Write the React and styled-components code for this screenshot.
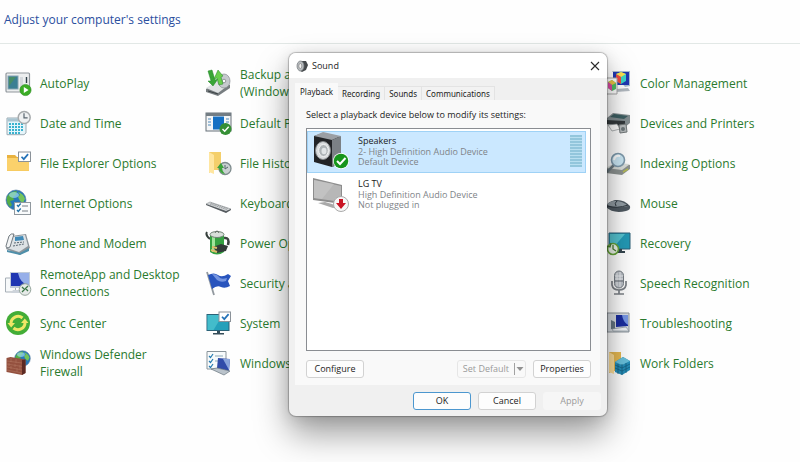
import React, { useState } from "react";
import styled, { createGlobalStyle } from "styled-components";

const GlobalStyle = createGlobalStyle`
  * { box-sizing: border-box; }
  body {
    margin: 0;
    background: #fefefe;
    font-family: "Open Sans", "Noto Sans", sans-serif;
    overflow: hidden;
  }
  button { font: inherit; }
`;

const Page = styled.main`
  position: relative;
  min-height: 100vh;
`;

const Header = styled.header`
  height: 44px;
  padding: 0 4px 4px;
  display: flex;
  align-items: center;
  border-bottom: 1px solid #e2e8e6;
`;

const Heading = styled.h1`
  margin: 0;
  font-size: 12px;
  line-height: 16px;
  font-weight: 400;
  color: #2b4f9e;
`;

const Catalogue = styled.nav`
  display: grid;
  grid-template-columns: repeat(4, 200px);
  padding-top: 19px;
`;

const Column = styled.ul`
  list-style: none;
  margin: 0;
  padding: 0;
  grid-column: ${(p) => p.$at};
`;

const Entry = styled.li`
  height: 40px;
`;

const EntryLink = styled.a`
  height: 100%;
  padding: 0 4px;
  display: flex;
  align-items: center;
  gap: 8px;
  font-size: 12px;
  line-height: 17px;
  color: #2a7a2e;
  text-decoration: none;
  white-space: pre-line;
`;

const Icon = styled.svg`
  width: ${(p) => p.$size || 28}px;
  height: ${(p) => p.$size || 28}px;
  flex: none;
  display: block;
`;

const Dialog = styled.section`
  position: absolute;
  left: 289px;
  top: 53px;
  width: 318px;
  display: flex;
  flex-direction: column;
  background: #f0f0f0;
  border-radius: 7px;
  overflow: hidden;
  box-shadow: 0 0 1px 1px rgba(0, 0, 0, 0.24), 0 18px 34px rgba(0, 0, 0, 0.38), 0 2px 16px rgba(0, 0, 0, 0.12);
  font-size: 9px;
  line-height: 10px;
  color: #1c1c1c;
`;

const TitleBar = styled.header`
  height: 25px;
  padding: 0 7px;
  display: flex;
  align-items: center;
  gap: 4px;
  background: #fff;
`;

const Title = styled.h2`
  flex: 1;
  margin: 0;
  font-size: 9px;
  font-weight: 400;
`;

const CloseButton = styled.button`
  display: flex;
  padding: 0;
  border: 0;
  background: none;
`;

const TabStrip = styled.div`
  display: flex;
  align-items: flex-end;
  height: 22px;
  padding: 0 6px;
`;

const Tab = styled.button`
  height: ${(p) => (p.$active ? 17 : 14)}px;
  padding: 0 4px;
  border: 1px solid ${(p) => (p.$active ? "#f9f9f9" : "#e3e3e3")};
  border-bottom: 0;
  border-left-width: ${(p) => (p.$active ? 1 : 0)}px;
  background: ${(p) => (p.$active ? "#f9f9f9" : "#f2f2f2")};
  color: #1c1c1c;
  font-family: "Noto Sans", sans-serif;
  font-size: 8px;
  white-space: nowrap;
`;

const Panel = styled.div`
  margin: 0 7px 0 6px;
  padding: 10px 9px 7px 11px;
  display: flex;
  flex-direction: column;
  background: #f9f9f9;
`;

const Prompt = styled.p`
  margin: 0 0 8px;
`;

const DeviceList = styled.ul`
  list-style: none;
  margin: 0;
  padding: 2px 4px 2px 0;
  min-height: 223px;
  display: flex;
  flex-direction: column;
  gap: 1px;
  background: #fff;
  border: 1px solid #8a8d92;
`;

const Device = styled.li`
  height: 42px;
  padding: 1px 3px 3px 4px;
  display: flex;
  align-items: center;
  background: ${(p) => (p.$selected ? "#cbe8ff" : "#fff")};
  border: 1px solid ${(p) => (p.$selected ? "#9fd2f6" : "#fff")};
`;

const DeviceText = styled.div`
  flex: 1;
  margin-left: 8px;
  color: #808488;
`;

const DeviceName = styled.div`
  margin-bottom: 1px;
  color: #1c1c1c;
`;

const Meter = styled.div`
  width: 12px;
  height: 32px;
  background: repeating-linear-gradient(#93c6dc 0 2px, #b9dff0 2px 3px);
`;

const Actions = styled.div`
  display: flex;
  align-items: center;
  gap: 7px;
  margin-top: ${(p) => (p.$footer ? 0 : 9)}px;
  padding: ${(p) => (p.$footer ? "7px 6px 6px" : "0")};
`;

const Spacer = styled.span`
  flex: 1;
`;

const Button = styled.button`
  min-width: 58px;
  height: 18px;
  padding: 0 4px;
  border: 1px solid ${(p) => (p.$primary ? "#4c97cf" : "#d2d2d2")};
  border-radius: 3px;
  background: #fdfdfd;
  color: #1c1c1c;
  &:disabled {
    border-color: #f6f6f6;
    background: #f6f6f6;
    color: #9a9a9a;
  }
`;

const Split = styled.div`
  display: flex;
  align-items: center;
  height: 18px;
  border: 1px solid #e6e6e6;
  border-radius: 3px;
`;

const SplitButton = styled.button`
  display: flex;
  align-items: center;
  height: 12px;
  padding: 0 ${(p) => (p.$arrow ? 1 : 5)}px;
  border: 0;
  border-left: ${(p) => (p.$arrow ? "1px solid #a2a2a2" : "0")};
  background: none;
  color: #9a9a9a;
`;

const Globe = ({ x, y, r }) => (
  <g>
    <circle cx={x} cy={y} r={r} fill="#2878b8" stroke="#53799a" strokeWidth=".6" />
    <g transform={`translate(${x} ${y}) scale(${r / 10})`}>
      <path d="M-9-3Q-6-9 1-9L0-5-3-3-2 0-6 1-4 5-6 7Q-10 3-9-3Z" fill="#55ad46" />
      <path d="M2-8Q8-6 9-1L7 3 4 1 2-3 4-5ZM-1 2 4 3 3 7 0 9-2 6Z" fill="#75c45a" />
      <ellipse cx="-2" cy="-5" rx="5" ry="3" fill="#a4e0f5" opacity=".65" />
    </g>
  </g>
);

const CheckCard = ({ x, y, w = 12, h = 9.5 }) => (
  <g>
    <rect x={x} y={y} width={w} height={h} fill="#fff" stroke="#8b9299" />
    <path d={`M${x + 3} ${y + h / 2}l2.3 2.4 4.3-5`} fill="none" stroke="#2472b8" strokeWidth="1.7" />
  </g>
);

const art = {
  autoplay: (
    <>
      <rect x="2" y="4" width="23.5" height="19" rx="1" fill="#eceeef" stroke="#8f969c" strokeWidth="1.2" />
      <rect x="4" y="7" width="10" height="13" fill="#3b7f93" stroke="#85a3b0" />
      <path d="M5 8h7l-7 9Z" fill="#478c67" />
      <path d="M16 8h3v11h-3z" fill="#d5d9dd" />
      <path d="M22.5 8v6" stroke="#2d3f48" strokeWidth="1.4" />
      <circle cx="21.5" cy="21" r="5.6" fill="#3bad25" stroke="#2a8c20" strokeWidth=".6" />
      <path d="M19.8 18v6l4.8-3Z" fill="#fff" />
    </>
  ),
  date: (
    <>
      <path d="M3 9h19v15l-2 1.7H3Z" fill="#e5f5fa" stroke="#9cabb3" />
      <path d="M3.5 9.5h18v3h-18z" fill="#a9c4d0" />
      <path d="M5 15h15M5 18h15M5 21h15M5 24h12" stroke="#39b2cf" strokeWidth="1.8" strokeDasharray="2 1" />
      <circle cx="20.2" cy="8.5" r="6" fill="#eff1f2" stroke="#a7abad" strokeWidth="1.5" />
      <path d="M20 4.3v4.5h3.6" fill="none" stroke="#59666f" strokeWidth="1.2" />
    </>
  ),
  explorer: (
    <>
      <path d="M3 6h8l2 2h12v14H3Z" fill="#e9b23f" />
      <path d="M3 9h22v12.8H3Z" fill="#fbd16b" />
      <CheckCard x={14.5} y={3} />
    </>
  ),
  internet: (
    <>
      <Globe x={12} y={11} r={10} />
      <rect x="10.5" y="13.5" width="16" height="12" fill="#f9fbfc" stroke="#90989e" />
      <path d="m13 16 1.3 1.5 2.4-3M13 21l1.3 1.5 2.4-3" fill="none" stroke="#2372a8" strokeWidth="1.3" />
      <path d="M18 17h6M18 22h6" stroke="#777f85" />
    </>
  ),
  phone: (
    <>
      <path d="M2 20 7 7 22 5l4 14-10 7Z" fill="#8d959b" />
      <path d="M3 19 8 8 21 6l3 11-9 6Z" fill="#dde2e5" />
      <path d="m11 8 8-1 1 4-9 1Z" fill="#3f8ab8" />
      <path d="M5 7q2-3 5-2L6 18q-4 2-4-1Z" fill="#f2f4f5" stroke="#636c73" strokeWidth=".9" />
      <path d="m10 14 10-1M9 17l11-2" stroke="#5c6973" strokeDasharray="2 1" />
      <path d="m3 21 13 3 9-5v3l-9 4-13-3Z" fill="#4e8faa" />
    </>
  ),
  remote: (
    <>
      <path d="M1.5 9h10v14h-10z" fill="#f7f9fa" stroke="#a7afb7" />
      <path d="M6 3h20v16H6z" fill="#bfcad8" />
      <path d="M7 4h18v13H7z" fill="#1e36b2" />
      <path d="M14 4h11v13Q16 14 14 4Z" fill="#96afe9" />
      <path d="M9 21h12l3 3H7Z" fill="#cdd3da" />
      <circle cx="21" cy="20.5" r="5.8" fill="#e6eae8" stroke="#94a49b" />
      <path d="m18 18 2.5 2.5L18 23m6-6-2.5 2.5L24 22" fill="none" stroke="#3b7647" strokeWidth="1.3" />
    </>
  ),
  sync: (
    <>
      <circle cx="14" cy="14" r="12" fill="#43ad37" />
      <path d="M7 14.5A7 7 0 0 1 18.5 9" fill="none" stroke="#f0e666" strokeWidth="3" />
      <path d="M3.5 14h7.5l-3.8 4.5Z" fill="#f0e666" />
      <path d="M21 13.5A7 7 0 0 1 9.5 19" fill="none" stroke="#f0e666" strokeWidth="3" />
      <path d="M24.5 14H17l3.8-4.5Z" fill="#f0e666" />
    </>
  ),
  firewall: (
    <>
      <Globe x={18.5} y={9.5} r={7.8} />
      <path d="m2.5 9 4-1 15 2.500V24L18 26 2.500 23Z" fill="#94513f" />
      <path d="m18 11 3.500-.5V24L18 26Z" fill="#5d2a23" />
      <path d="m3 12 15 2M3 15l15 2.500M3 18l15 3M3 21l15 3M7 9v4m5-3v4m-7 0v3m6-2v3m5-2v4M7 17v3m6-1v4" stroke="#b57b64" strokeWidth=".5" />
    </>
  ),
  backup: (
    <>
      <path d="m2 20 11-7 13 3v3L14 27 2 23Z" fill="#777d80" />
      <path d="m2 19 11-7 13 3-12 9Z" fill="#dfe2e3" />
      <ellipse cx="20" cy="12" rx="6" ry="7" fill="#c6cace" stroke="#888e92" strokeWidth=".7" />
      <circle cx="20" cy="12" r="1.800" fill="#fff" stroke="#929699" />
      <path d="m4 22 10 3" stroke="#3b4245" />
      <path d="M9 17 4 12h3L4 2l4-1 3 10 3-1Z" fill="#38a536" stroke="#238426" strokeWidth=".5" />
      <path d="m14 1 5 6-2 1 2 7-4 1-2-7-3 1Z" fill="#68cf4d" stroke="#238426" strokeWidth=".5" />
    </>
  ),
  defaults: (
    <>
      <rect x="2" y="4" width="25" height="18" fill="#f5f6f7" stroke="#667078" />
      <path d="M2 4h25v3H2z" fill="#737d84" />
      <path d="M9 7.500h11v13H9z" fill="#1670c3" />
      <path d="M4 10h3m-3 3h3m-3 3h3m15-6h3m-3 3h3" stroke="#4f89b9" />
      <circle cx="21.500" cy="20" r="6" fill="#358f35" />
      <path d="m18.500 20 2.200 2.300 4-4.500" fill="none" stroke="#fff" strokeWidth="1.400" />
    </>
  ),
  history: (
    <>
      <path d="M5 3h12v18H9l-4 3Z" fill="#f4cf6b" />
      <path d="m5 3 5 3v19l-5-2Z" fill="#ffe6a0" />
      <circle cx="21" cy="19.500" r="6" fill="#c9d0d1" stroke="#7e8b8d" strokeWidth="1.300" />
      <path d="M21 16v4l3-2" fill="none" stroke="#536268" />
      <path d="M21 25a6 6 0 0 1-6-6h-2l4-5 3 5h-2q0 3 3 6Z" fill="#3ca43b" />
    </>
  ),
  keyboard: (
    <>
      <path d="m2 15 4-2 21 7-5 3Z" fill="#d2d5d7" stroke="#8f9497" strokeWidth=".6" />
      <path d="m6 15 17 5.500M7 14l17 5.500" stroke="#85898c" strokeWidth=".8" strokeDasharray="1.500 .8" />
      <path d="m2 15 20 7 5-2v1l-5 3-20-8Z" fill="#555b5f" />
    </>
  ),
  power: (
    <>
      <path d="M20 9q6-1 4 7" fill="none" stroke="#3b4341" strokeWidth="2.500" />
      <path d="M6 10Q1 6 3 3" fill="none" stroke="#36403c" strokeWidth="2" />
      <path d="M6 6q7-3 14 0v17q-7 5-14 0Z" fill="#35a142" />
      <path d="M8 7h3v16H8z" fill="#a1e49c" />
      <ellipse cx="13" cy="5.500" rx="7" ry="3" fill="#d8dfda" stroke="#6f8175" />
      <path d="M11 4q2-4 4 0" fill="none" stroke="#667068" />
      <path d="m9 18 8-3 7 2-2 5-9 2Z" fill="#333b39" />
      <path d="m7 21 6 2m-5-5 5 1" stroke="#dbbd68" strokeWidth="2" />
    </>
  ),
  flag: (
    <>
      <path d="m3 3 7 23" stroke="#92999f" strokeWidth="1.800" />
      <path d="M4 6q6-3 10 0t10-1l3 2-3 5 2 5q-5 3-9 1t-9 2Z" fill="#2854bd" />
      <path d="M8 5q5 0 7 3t8 1l-1 3q-5 2-9-1Z" fill="#7595e0" />
    </>
  ),
  system: (
    <>
      <rect x="3" y="5.500" width="22" height="16" fill="#25a0ba" stroke="#2b6278" />
      <path d="M3.500 6h15l-9 15h-6z" fill="#43bccb" />
      <path d="M13 22h3v2h4v1.500H9V24h4z" fill="#344c59" />
      <CheckCard x={15} y={3} w={11.5} />
    </>
  ),
  tools: (
    <>
      <path d="M3 2.500h19V20H3z" fill="#f7fafb" stroke="#89949b" />
      <path d="m5 7 1.500 1.500L9 5m-4 7 1.500 1.500L9 10m-4 7 1.500 1.500L9 15" fill="none" stroke="#247ab0" strokeWidth="1.200" />
      <path d="M11 7h8M11 12h5" stroke="#8aa8b7" />
      <path d="m14 9 12 1-1 12-12-3Z" fill="#314ca9" />
      <path d="m19 10 7 0-1 11Z" fill="#8aa5db" />
      <path d="m7 20 6-1 13 3-6 4Z" fill="#bac3cb" stroke="#69757e" strokeWidth=".7" />
    </>
  ),
  color: (
    <>
      <path d="M8 2h18v15l-5 1Z" fill="#aabed1" />
      <path d="M9 3h16v13H9z" fill="#2038b2" />
      <path d="m12 5 5-2 5 2v7l-5 3-5-3Z" fill="#3bd5c7" />
      <path d="m12 5 5-2 5 2-5 3Z" fill="#ffe04e" />
      <path d="m12 5 5 3v7l-5-3Z" fill="#f04a42" />
      <path d="m12 20 12-1 2 3-14 1Z" fill="#b2b9c0" />
      <path d="M2 9h11v16H2z" fill="#fff" stroke="#a8a8a8" />
      <path d="m4 13 4-2 4 3v6l-4 2-4-3Z" fill="#50bf68" />
      <path d="m4 13 4-2 4 3-4 2Z" fill="#edc445" />
      <path d="m4 13 4 3v6l-4-3Z" fill="#dc49a5" />
    </>
  ),
  printer: (
    <>
      <path d="m3 9 6-5 17 2v8l-5 4L2 15Z" fill="#858f92" />
      <path d="m6 8 4-3 14 2-4 3Z" fill="#3d5f62" />
      <path d="m2 11 19 1v5L2 15Z" fill="#343a3d" />
      <path d="m4 16 9-1 3 5-8 2Z" fill="#fff" stroke="#7d8587" strokeWidth=".6" />
      <path d="m15 16 7-1 1 8-7 1Z" fill="#b7bcbd" stroke="#727879" />
      <circle cx="19" cy="20" r="2" fill="#6d777a" />
    </>
  ),
  indexing: (
    <>
      <path d="m2 20 8-5 16 1v4l-8 6-16-2Z" fill="#8e9492" />
      <path d="m2 19 8-5 16 1-8 6Z" fill="#dadeda" />
      <path d="m19 23 5-3" stroke="#b6bd54" strokeWidth="1.500" />
      <path d="m10 16-7 7" stroke="#6d7b82" strokeWidth="2.500" />
      <circle cx="14" cy="11" r="6.500" fill="#cbe8f5" stroke="#7f9bad" strokeWidth="1.600" />
      <path d="M10 11q1-5 6-4" fill="none" stroke="#fff" strokeWidth="2" />
    </>
  ),
  mouse: (
    <>
      <path d="M2 18q1-5 9-7 9-1 15 6 1 4-4 5-13 3-20-4Z" fill="#4f5961" />
      <path d="M3 16q2-4 8-4 8 0 13 5-10 3-21-1Z" fill="#929da4" />
      <path d="M13 12q-3 2-1 5m-9 0q10 3 21-1" fill="none" stroke="#303940" />
    </>
  ),
  recovery: (
    <>
      <path d="M5 4h21v16H5z" fill="#239ab6" stroke="#2f6178" />
      <path d="M6 5h15L9 19H6z" fill="#55c3d0" />
      <path d="M14 20h4v2h3v2H11v-2h3z" fill="#34454d" />
      <circle cx="9" cy="20" r="5.500" fill="#edf4e9" stroke="#67a63a" strokeWidth="1.600" />
      <path d="M9 16v4l3 2M3 17l3 1 1-4" fill="none" stroke="#4b7d32" strokeWidth="1.300" />
    </>
  ),
  speech: (
    <>
      <path d="M8 12v4q1 5 7 5t7-5v-4M15 21v4m-5 0h10" fill="none" stroke="#7c8187" strokeWidth="1.700" />
      <rect x="10.500" y="2" width="9" height="17" rx="4.500" fill="#babfc6" stroke="#777e85" />
      <path d="M13 4v13m3-14v15M11 7h8m-8 3h8" stroke="#e9ecef" />
      <path d="M11 12h8" stroke="#636970" />
    </>
  ),
  trouble: (
    <>
      <path d="M3 4h22v19H3z" fill="#d8dde2" stroke="#8e969d" />
      <path d="M12 6h12v11l-12 1Z" fill="#1b2e9f" />
      <path d="M18 6h6v10q-5-3-6-10Z" fill="#7797e4" />
      <path d="m7 11 4 2v7H7z" fill="#667784" />
      <path d="m8 20 14-2 3 4H9Z" fill="#eef1f4" stroke="#7b8791" strokeWidth=".6" />
    </>
  ),
  work: (
    <>
      <path d="M5 3h12v19H9l-4 2Z" fill="#e6b952" />
      <path d="m5 3 5 3v19l-5-2Z" fill="#ffe09a" />
      <path d="m11 13 8-5 7 4v9l-8 5-7-3Z" fill="#258db7" />
      <path d="m11 13 8-5 7 4-8 4Z" fill="#68c0db" />
      <path d="m11 16 7 3 8-4m-15 4 7 3 8-4m-12-3v10m8-11v10m-4-9v11" fill="none" stroke="#156181" strokeWidth=".8" />
    </>
  ),
};

const columns = [
  { at: 1, items: [["autoplay", "AutoPlay"], ["date", "Date and Time"], ["explorer", "File Explorer Options"], ["internet", "Internet Options"], ["phone", "Phone and Modem"], ["remote", "RemoteApp and Desktop\nConnections"], ["sync", "Sync Center"], ["firewall", "Windows Defender\nFirewall"]] },
  { at: 2, items: [["backup", "Backup and Restore\n(Windows 7)"], ["defaults", "Default Programs"], ["history", "File History"], ["keyboard", "Keyboard"], ["power", "Power Options"], ["flag", "Security and Maintenance"], ["system", "System"], ["tools", "Windows Tools"]] },
  { at: 4, items: [["color", "Color Management"], ["printer", "Devices and Printers"], ["indexing", "Indexing Options"], ["mouse", "Mouse"], ["recovery", "Recovery"], ["speech", "Speech Recognition"], ["trouble", "Troubleshooting"], ["work", "Work Folders"]] },
];

const SpeakerArt = () => (
  <Icon $size={38} viewBox="0 0 38 38" aria-hidden="true">
    <path d="m2 4 9-3 18 4v26l-9 4-18-5Z" fill="#222427" />
    <path d="m2 4 9-4 18 4-9 4Z" fill="#9b9fa4" />
    <path d="m20 8 9-4v27l-9 4Z" fill="#7b8085" />
    <ellipse cx="11" cy="18.500" rx="7.500" ry="9" fill="#d9dcde" stroke="#838789" />
    <ellipse cx="11.500" cy="18.500" rx="4.800" ry="6" fill="#aeb4b7" stroke="#f3f4f4" />
    <ellipse cx="12" cy="19" rx="2.500" ry="3.200" fill="#e1e5e7" />
    <circle cx="29" cy="29" r="8" fill="#fff" />
    <circle cx="29" cy="29" r="7.300" fill="#16951c" />
    <path d="m25 29 3 3 5.500-6" fill="none" stroke="#fff" strokeWidth="2" />
  </Icon>
);

const TvArt = () => (
  <Icon $size={38} viewBox="0 0 38 38" aria-hidden="true">
    <path d="m1 3 29 7v19L1 25Z" fill="#8d8d8d" />
    <path d="m2 5 27 6v16L2 23Z" fill="#b7b7b7" />
    <path d="m2 5 20 4-12 15-8-1Z" fill="#c6c6c6" opacity=".7" />
    <path d="m13 27 7 2 6 3-5 1-15-5Z" fill="#a9a9a9" />
    <circle cx="29" cy="29" r="7.500" fill="#f7f7f7" stroke="#aaa" />
    <path d="M27 24h4v4h3l-5 6-5-6h3Z" fill="#c91525" />
  </Icon>
);

const devices = [
  { name: "Speakers", driver: "2- High Definition Audio Device", state: "Default Device", Art: SpeakerArt, meter: true },
  { name: "LG TV", driver: "High Definition Audio Device", state: "Not plugged in", Art: TvArt },
];

const tabs = ["Playback", "Recording", "Sounds", "Communications"];

function SoundDialog() {
  const [tab, setTab] = useState("Playback");
  const [device, setDevice] = useState("Speakers");
  return (
    <Dialog role="dialog" aria-labelledby="sound-title">
      <TitleBar>
        <Icon $size={12} viewBox="0 0 12 12" aria-hidden="true">
          <path d="m5 1 5 0 2 4-2 5-4 2-3-2Z" fill="#44484b" />
          <ellipse cx="4.500" cy="6" rx="3.500" ry="5" fill="#b8bcbf" stroke="#73787b" strokeWidth=".7" />
          <ellipse cx="4.300" cy="6" rx="1.500" ry="2.500" fill="#f3f3f3" stroke="#777" strokeWidth=".6" />
        </Icon>
        <Title id="sound-title">Sound</Title>
        <CloseButton aria-label="Close">
          <Icon $size={10} viewBox="0 0 10 10" aria-hidden="true">
            <path d="m1 1 8 8m0-8-8 8" stroke="#2b2b2b" strokeWidth="1.100" />
          </Icon>
        </CloseButton>
      </TitleBar>
      <TabStrip role="tablist">
        {tabs.map((name) => (
          <Tab key={name} role="tab" aria-selected={tab === name} $active={tab === name} onClick={() => setTab(name)}>
            {name}
          </Tab>
        ))}
      </TabStrip>
      <Panel role="tabpanel">
        <Prompt id="device-prompt">Select a playback device below to modify its settings:</Prompt>
        <DeviceList role="listbox" aria-labelledby="device-prompt">
          {devices.map(({ name, driver, state, Art, meter }) => (
            <Device key={name} role="option" aria-selected={device === name} $selected={device === name} onClick={() => setDevice(name)}>
              <Art />
              <DeviceText>
                <DeviceName>{name}</DeviceName>
                <div>{driver}</div>
                <div>{state}</div>
              </DeviceText>
              {meter && <Meter />}
            </Device>
          ))}
        </DeviceList>
        <Actions>
          <Button>Configure</Button>
          <Spacer />
          <Split>
            <SplitButton disabled>Set Default</SplitButton>
            <SplitButton $arrow disabled aria-label="More default options">
              <Icon $size={8} viewBox="0 0 8 8" aria-hidden="true">
                <path d="M.5 2h7L4 6Z" fill="#929292" />
              </Icon>
            </SplitButton>
          </Split>
          <Button>Properties</Button>
        </Actions>
      </Panel>
      <Actions $footer>
        <Spacer />
        <Button $primary>OK</Button>
        <Button>Cancel</Button>
        <Button disabled>Apply</Button>
      </Actions>
    </Dialog>
  );
}

export default function App() {
  return (
    <Page>
      <GlobalStyle />
      <Header>
        <Heading>Adjust your computer's settings</Heading>
      </Header>
      <Catalogue aria-label="Control Panel items">
        {columns.map(({ at, items }) => (
          <Column key={at} $at={at}>
            {items.map(([icon, label]) => (
              <Entry key={icon}>
                <EntryLink href={`#${icon}`}>
                  <Icon viewBox="0 0 28 28" aria-hidden="true">{art[icon]}</Icon>
                  <span>{label}</span>
                </EntryLink>
              </Entry>
            ))}
          </Column>
        ))}
      </Catalogue>
      <SoundDialog />
    </Page>
  );
}
